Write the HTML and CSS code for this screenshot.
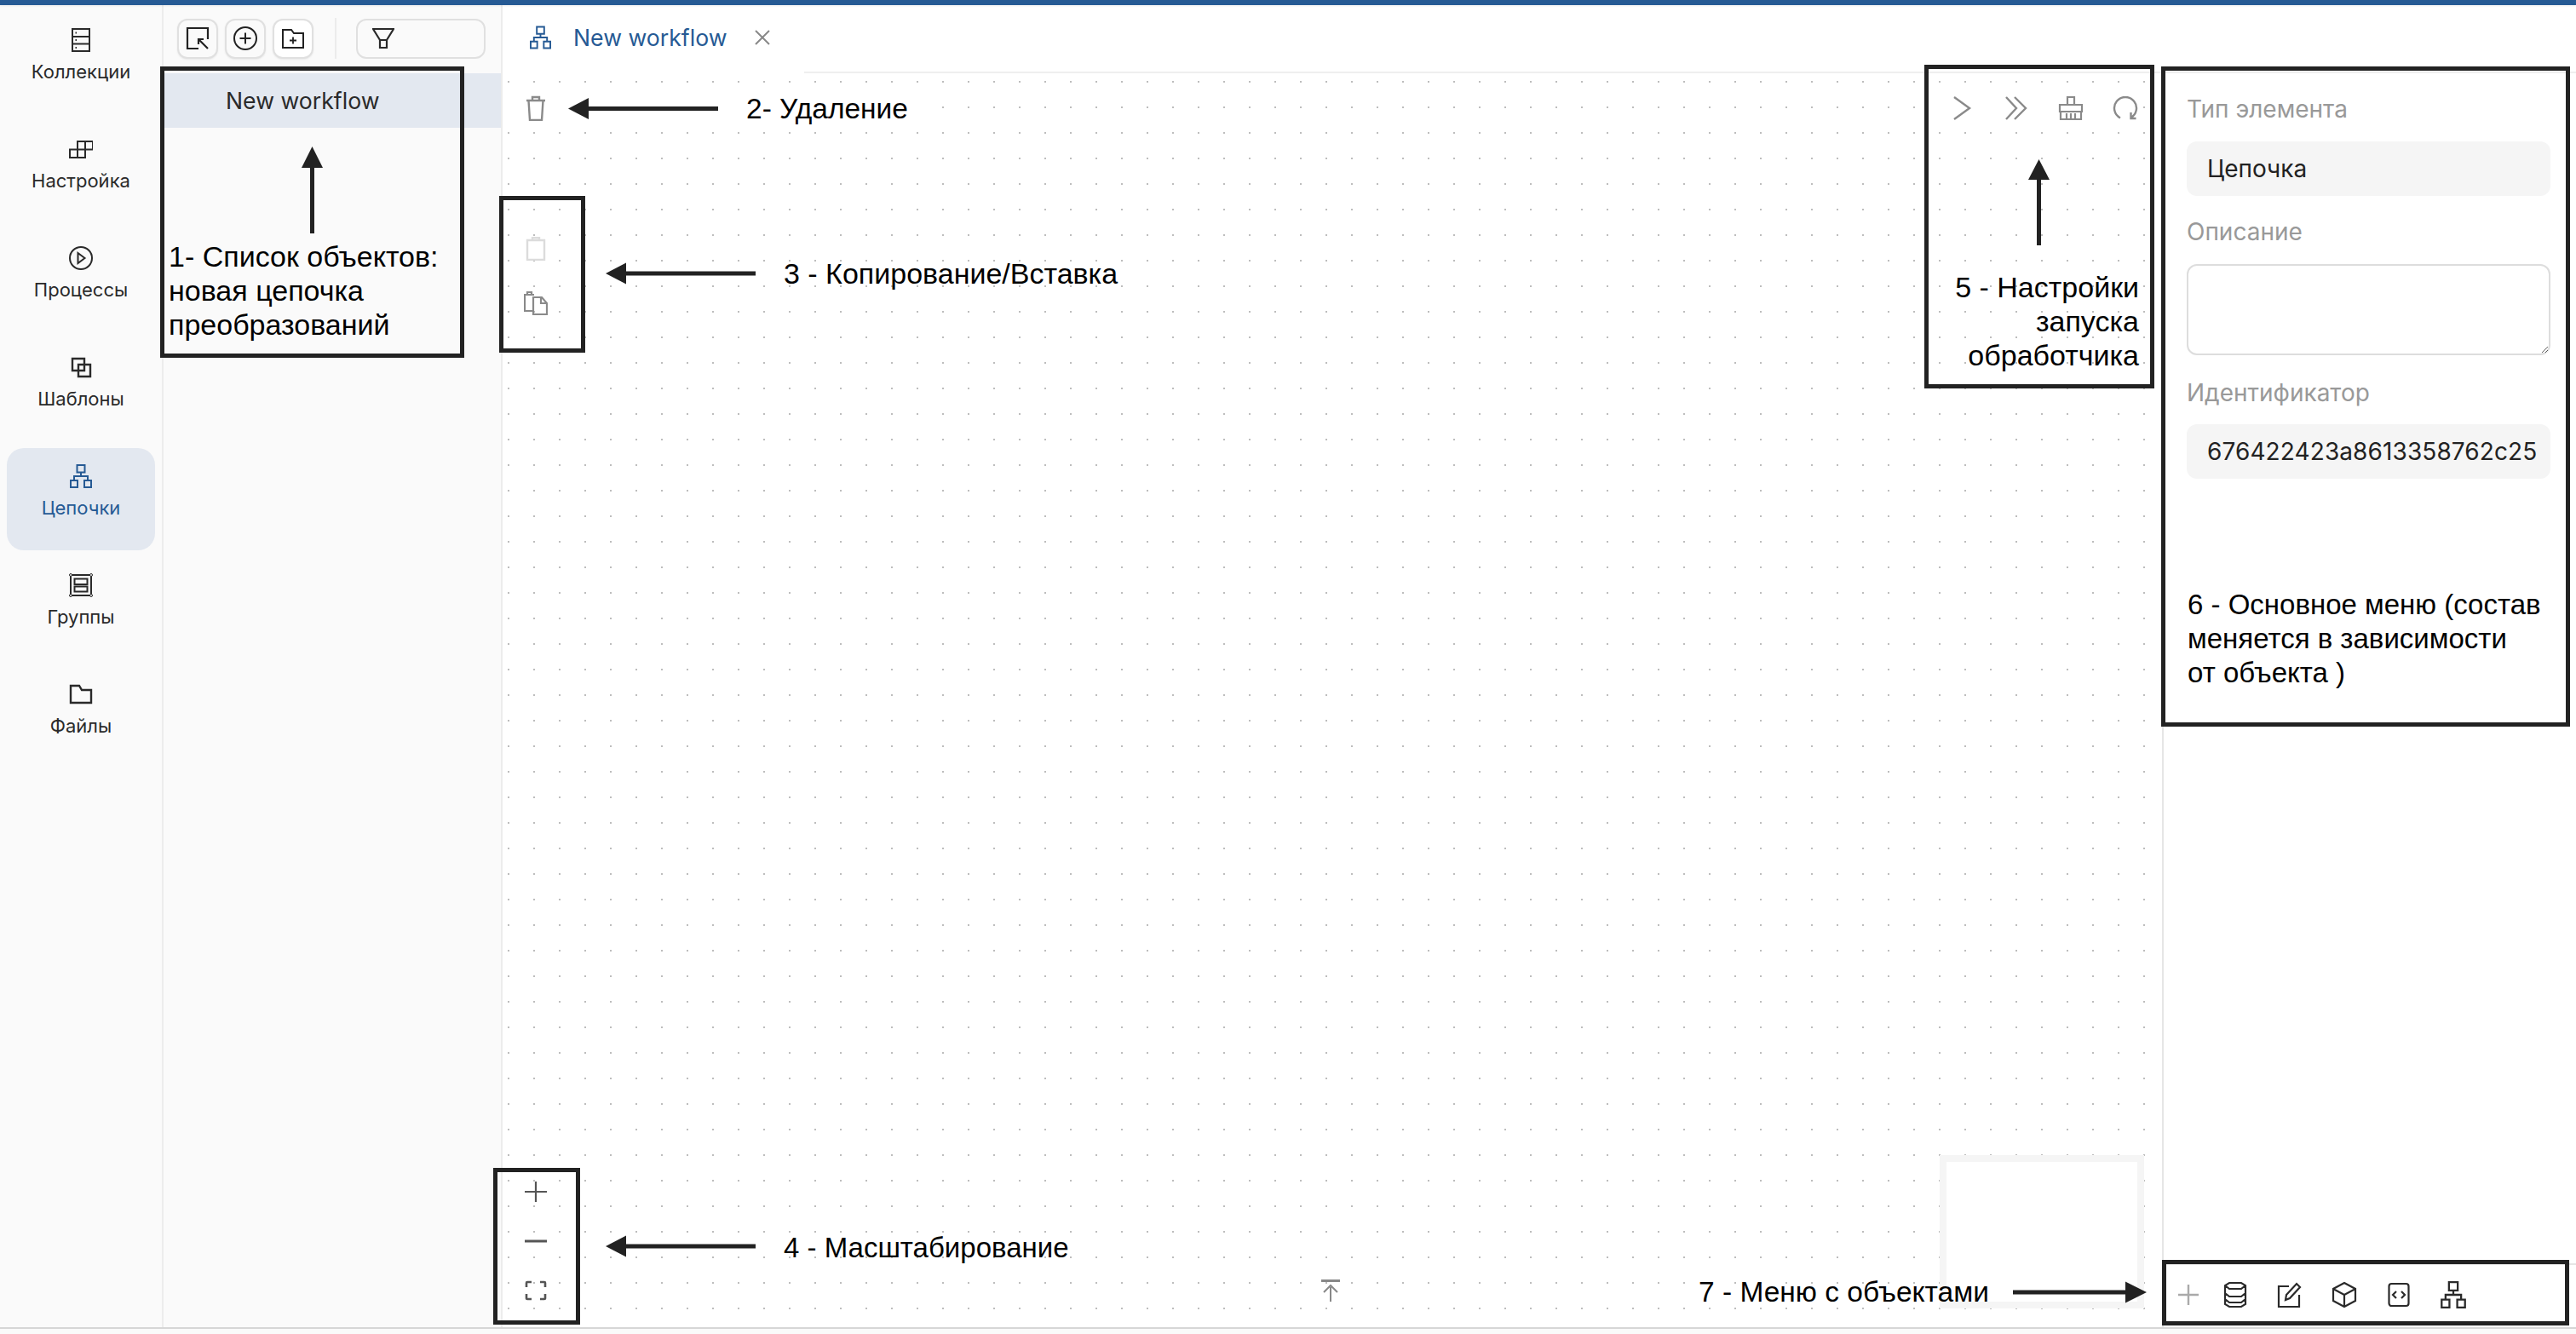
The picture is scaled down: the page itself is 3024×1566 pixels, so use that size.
FILE: index.html
```html
<!DOCTYPE html>
<html>
  <head>
    <title>New workflow</title>
    <link rel="stylesheet" href="styles.css">
  </head>
  <body>
    <svg class="sprites" width="0" height="0">
      <symbol id="i-tree" viewBox="0 0 26 28">
        <path d="M8.5 1h9v8.5h-9zM13 9.5V14M5 19v-5h16v5M1 19h8v8H1zM17 19h8v8h-8z" fill="none" stroke="currentColor" stroke-width="2"/>
      </symbol>
    </svg>

    <div class="topbar"></div>

    <div class="app">
      <!-- left navigation -->
      <nav class="sidebar">
        <a class="nav-item">
          <svg class="nav-icon" viewBox="0 0 28 28"><path d="M4 1h20v26H4zM4 10h20M4 18.500h20M7.500 5.500h1.500M7.500 14h1.500M7.500 23h1.500" fill="none" stroke="currentColor" stroke-width="2"/></svg>
          <span>Коллекции</span>
        </a>
        <a class="nav-item">
          <svg class="nav-icon" viewBox="0 0 28 28"><path d="M1 14.500h18v9.500H1zM10 14.500V24M10 14.500V5h18v9.500H19zM19 5v9.500" fill="none" stroke="currentColor" stroke-width="2"/></svg>
          <span>Настройка</span>
        </a>
        <a class="nav-item">
          <svg class="nav-icon" viewBox="0 0 28 28"><circle cx="14" cy="14" r="13" fill="none" stroke="currentColor" stroke-width="2"/><path d="M10.500 8l8 6-8 6z" fill="none" stroke="currentColor" stroke-width="2"/></svg>
          <span>Процессы</span>
        </a>
        <a class="nav-item">
          <svg class="nav-icon" viewBox="0 0 28 28"><path d="M4 4h14v14H4zM11 11h14v14H11z" fill="none" stroke="currentColor" stroke-width="2.400"/></svg>
          <span>Шаблоны</span>
        </a>
        <a class="nav-item active">
          <svg class="nav-icon"><use href="#i-tree"/></svg>
          <span>Цепочки</span>
        </a>
        <a class="nav-item">
          <svg class="nav-icon" viewBox="0 0 28 28"><path d="M2 2h24v24H2zM6.500 6.500h15v6.500h-15zM6.500 15.500h15v6h-15z" fill="none" stroke="currentColor" stroke-width="2"/><g fill="#fafafa" stroke="currentColor" stroke-width="1"><circle cx="2" cy="2" r="1.500"/><circle cx="26" cy="2" r="1.500"/><circle cx="2" cy="26" r="1.500"/><circle cx="26" cy="26" r="1.500"/></g></svg>
          <span>Группы</span>
        </a>
        <a class="nav-item">
          <svg class="nav-icon" viewBox="0 0 28 28"><path d="M2 4h10l3 5h11v15H2z" fill="none" stroke="currentColor" stroke-width="2.400"/></svg>
          <span>Файлы</span>
        </a>
      </nav>

      <!-- objects list -->
      <section class="panel">
        <div class="panel-toolbar">
          <button class="tool-btn">
            <svg class="btn-icon" viewBox="0 0 28 28"><path d="M26 15V2H2v24h13M26 26L15 15M15 21v-6h6" fill="none" stroke="currentColor" stroke-width="2.200"/></svg>
          </button>
          <button class="tool-btn">
            <svg class="btn-icon" viewBox="0 0 28 28"><circle cx="14" cy="14" r="13" fill="none" stroke="currentColor" stroke-width="2"/><path d="M14 7.500v13M7.500 14h13" fill="none" stroke="currentColor" stroke-width="2"/></svg>
          </button>
          <button class="tool-btn tool-btn-white">
            <svg class="btn-icon" viewBox="0 0 28 28"><path d="M2 4h10l3 4h11v17H2z" fill="none" stroke="currentColor" stroke-width="2"/><path d="M14 12.500v8M10 16.500h8" fill="none" stroke="currentColor" stroke-width="1.800"/></svg>
          </button>
          <span class="toolbar-divider"></span>
          <div class="filter">
            <svg class="filter-icon" viewBox="0 0 26 24"><path d="M1 1h24l-8 13v9H9v-9zM9 14h8" fill="none" stroke="currentColor" stroke-width="2.200"/></svg>
          </div>
        </div>
        <div class="list-row">New workflow</div>
      </section>

      <!-- workspace -->
      <main class="main">
        <div class="tabbar">
          <div class="tab">
            <svg class="tab-icon"><use href="#i-tree"/></svg>
            <span class="tab-title">New workflow</span>
            <svg class="tab-close" viewBox="0 0 18 18"><path d="M1 1l16 16M17 1L1 17" fill="none" stroke="currentColor" stroke-width="2"/></svg>
          </div>
          <div class="tab-rest"></div>
        </div>

        <div class="work-body">
          <div class="canvas">
            <div class="canvas-strip strip-left">
              <svg class="canvas-icon icon-trash" viewBox="0 0 24 30"><path d="M1 6h22M8 6V2h8v4M3.500 6l1.500 23h14l1.500-23" fill="none" stroke="currentColor" stroke-width="2.400"/></svg>
            </div>
            <div class="clip-tools">
              <svg class="canvas-icon clip-off" viewBox="0 0 28 28"><path d="M4 4h20v23H4zM10 4V1h8v3" fill="none" stroke="currentColor" stroke-width="2.400"/></svg>
              <svg class="canvas-icon" viewBox="0 0 28 28"><path d="M11 23H1V4h11M4 4V1h5v3M11 7h10l6 7v13H11zM20 7v7h7" fill="none" stroke="currentColor" stroke-width="2.200"/></svg>
            </div>
            <div class="canvas-strip strip-right">
              <svg class="run-icon" viewBox="0 0 32 28"><path d="M7 1l18 13L7 27" fill="none" stroke="currentColor" stroke-width="2.400"/></svg>
              <svg class="run-icon" viewBox="0 0 32 28"><path d="M4 1l12 13L4 27M14 1l13 13-13 13" fill="none" stroke="currentColor" stroke-width="2.400"/></svg>
              <svg class="run-icon" viewBox="0 0 32 28"><path d="M12 10V1h8v9M3 10h26v8H3zM4 18v9h24v-9M11 20v7M16 20v7M21 20v7" fill="none" stroke="currentColor" stroke-width="2.200"/></svg>
              <svg class="run-icon" viewBox="0 0 32 28"><path d="M10 25.500A13 13 0 1 1 22 25.500M22.500 19v7h6" fill="none" stroke="currentColor" stroke-width="2.400"/></svg>
            </div>
            <div class="zoom-tools">
              <svg class="zoom-icon" viewBox="0 0 26 24"><path d="M0 12h26M13 0v24" fill="none" stroke="currentColor" stroke-width="2.200"/></svg>
              <svg class="zoom-icon" viewBox="0 0 26 24"><path d="M0 12h26" fill="none" stroke="currentColor" stroke-width="3"/></svg>
              <svg class="zoom-icon" viewBox="0 0 26 24"><path d="M2 8V3a1 1 0 0 1 1-1h5M18 2h5a1 1 0 0 1 1 1v5M24 16v5a1 1 0 0 1-1 1h-5M8 22H3a1 1 0 0 1-1-1v-5" fill="none" stroke="currentColor" stroke-width="2.600"/></svg>
            </div>
            <svg class="fold-icon" viewBox="0 0 22 26"><path d="M0 1.500h22" fill="none" stroke="currentColor" stroke-width="3"/><path d="M11 26V9M3 15l8-8 8 8" fill="none" stroke="currentColor" stroke-width="2"/></svg>
            <div class="minimap"></div>
          </div>

          <!-- properties -->
          <aside class="props">
            <div class="props-form">
              <label class="field-label">Тип элемента</label>
              <input class="field-input" value="Цепочка" readonly>
              <label class="field-label">Описание</label>
              <textarea class="field-area"></textarea>
              <label class="field-label field-label-last">Идентификатор</label>
              <input class="field-input field-id" value="676422423a8613358762c25" readonly>
            </div>
            <div class="props-bar">
              <svg class="bar-icon bar-add" viewBox="0 0 32 32"><path d="M4 16h24M16 4v24" fill="none" stroke="currentColor" stroke-width="2.400"/></svg>
              <svg class="bar-icon" viewBox="0 0 32 32"><path d="M9 2h14l5 3v22l-5 3H9l-5-3V5zM4 5l5 4h14l5-4M4 14l5 4h14l5-4M4 21l5 4h14l5-4" fill="none" stroke="currentColor" stroke-width="2.200"/></svg>
              <svg class="bar-icon" viewBox="0 0 32 32"><path d="M15 6H3v24h24V16M11 22l1-6L24 3l4 4-12 13z" fill="none" stroke="currentColor" stroke-width="2.200"/></svg>
              <svg class="bar-icon" viewBox="0 0 32 32"><path d="M16 2l13 7v14l-13 7-13-7V9zM3 9l13 7 13-7M16 16v14" fill="none" stroke="currentColor" stroke-width="2.200"/></svg>
              <svg class="bar-icon" viewBox="0 0 32 32"><rect x="4.500" y="3" width="23" height="26" rx="3" fill="none" stroke="currentColor" stroke-width="2.200"/><path d="M13 12l-4 4 4 4M19 12l4 4-4 4" fill="none" stroke="currentColor" stroke-width="2.200"/></svg>
              <svg class="bar-icon"><use href="#i-tree"/></svg>
            </div>
          </aside>
        </div>
      </main>
    </div>

    <div class="footer"></div>

    <!-- annotations drawn over the screenshot -->
    <div class="annotations">
      <svg class="arrows" width="3024" height="1566" viewBox="0 0 3024 1566">
        <path d="M364 197h5v77h-5z M366.500 172l12.500 25h-25z"/>
        <path d="M691 125h152v5H691z M667 127.500l24-12.500v25z"/>
        <path d="M735 318.500h152v5H735z M711 321l24-12.500v25z"/>
        <path d="M735 1460.500h152v5H735z M711 1463l24-12.500v25z"/>
        <path d="M2391 211h5v77h-5z M2393.500 187l12.500 24h-25z"/>
        <path d="M2363 1514.500h132v5h-132z M2520 1517l-25-12.500v25z"/>
      </svg>
      <div class="ann-box box-1"></div>
      <div class="ann-box box-3"></div>
      <div class="ann-box box-4"></div>
      <div class="ann-box box-5"></div>
      <div class="ann-box box-6"></div>
      <div class="ann-box box-7"></div>
      <div class="note note-1">1- Список объектов:<br>новая цепочка<br>преобразований</div>
      <div class="note note-2">2- Удаление</div>
      <div class="note note-3">3 - Копирование/Вставка</div>
      <div class="note note-4">4 - Масштабирование</div>
      <div class="note note-5">5 - Настройки<br>запуска<br>обработчика</div>
      <div class="note note-6">6 - Основное меню (состав<br>меняется в зависимости<br>от объекта )</div>
      <div class="note note-7">7 - Меню с объектами</div>
    </div>
  </body>
</html>
```

FILE: styles.css
```css
* {
  box-sizing: border-box;
}

html,
body {
  margin: 0;
  height: 100%;
}

body {
  position: relative;
  width: 3024px;
  height: 1566px;
  overflow: hidden;
  background-color: #fafafa;
  color: #2a2a2a;
  font-family: Inter, "Noto Sans", sans-serif;
}

.sprites {
  position: absolute;
}

.topbar {
  position: relative;
  z-index: 1;
  height: 6px;
  background-color: #265a94;
  box-shadow: 0 1px 3px rgba(0, 0, 0, 0.08);
}

.app {
  display: flex;
  height: 1552px;
}

.footer {
  height: 8px;
  border-top: 2px solid #d6d6d6;
  background-color: #fafafa;
}

/* sidebar */
.sidebar {
  flex: none;
  display: flex;
  flex-direction: column;
  gap: 8px;
  width: 192px;
  padding: 8px 8px 0 8px;
  border-right: 2px solid #ececec;
}

.nav-item {
  display: flex;
  flex-direction: column;
  align-items: center;
  gap: 9px;
  height: 120px;
  padding-top: 19px;
  border-radius: 20px;
  font-size: 22px;
  line-height: 28px;
}

.nav-icon {
  width: 28px;
  height: 28px;
}

.nav-item.active {
  background-color: #e3e8f0;
  color: #265a94;
}

/* objects list */
.panel {
  flex: none;
  width: 398px;
  border-right: 2px solid #ececec;
}

.panel-toolbar {
  display: flex;
  align-items: center;
  height: 80px;
  padding: 0 0 2px 16px;
}

.tool-btn {
  display: flex;
  align-items: center;
  justify-content: center;
  width: 48px;
  height: 47px;
  margin-right: 8px;
  padding: 0;
  border: 2px solid #e0e0e0;
  border-radius: 12px;
  background-color: #fafafa;
  box-shadow: 0 1px 2px #e8e8e8;
  color: #222;
}

.tool-btn-white {
  background-color: #fff;
}

.btn-icon {
  width: 28px;
  height: 28px;
}

.toolbar-divider {
  width: 2px;
  height: 48px;
  margin: 0 23px 0 17px;
  background-color: #ececec;
}

.filter {
  display: flex;
  align-items: center;
  width: 152px;
  height: 47px;
  padding-left: 17px;
  border: 2px solid #e0e0e0;
  border-radius: 12px;
}

.filter-icon {
  width: 26px;
  height: 24px;
}

.list-row {
  height: 64px;
  padding-left: 73px;
  background-color: #e3e8f0;
  font-size: 26.67px;
  line-height: 64px;
}

/* workspace */
.main {
  flex: 1;
  display: flex;
  flex-direction: column;
  min-width: 0;
  background-color: #fff;
}

.tabbar {
  flex: none;
  display: flex;
  height: 80px;
}

.tab {
  display: flex;
  align-items: center;
  width: 354px;
  padding: 0 0 4px 32px;
  border-radius: 16px 16px 0 0;
  background-color: #fff;
  color: #265a94;
}

.tab-icon {
  width: 25px;
  height: 28px;
}

.tab-title {
  margin: 0 32px 0 26px;
  font-size: 26.67px;
}

.tab-close {
  width: 18px;
  height: 18px;
  color: #888;
}

.tab-rest {
  flex: 1;
  border-bottom: 2px solid #efefef;
}

.work-body {
  flex: 1;
  display: flex;
  min-height: 0;
}

.canvas {
  position: relative;
  flex: none;
  width: 1948px;
  background-image: radial-gradient(circle, #bdbdbd 1px, transparent 1.3px);
  background-position: -8px -5px;
  background-size: 30px 30px;
}

.canvas-icon {
  display: block;
  width: 28px;
  height: 28px;
  color: #8a8a8a;
}

.canvas-strip {
  position: absolute;
  top: 21px;
  display: flex;
  align-items: center;
  height: 40px;
  background-color: #fff;
}

.strip-left {
  left: 0;
  width: 515px;
  padding-left: 27px;
}

.icon-trash {
  width: 24px;
  height: 30px;
}

.clip-tools {
  position: absolute;
  top: 192px;
  left: 25px;
  display: flex;
  flex-direction: column;
  gap: 36px;
}

.clip-off {
  color: #dcdcdc;
}

.strip-right {
  right: 27px;
  gap: 32px;
  padding-left: 20px;
}

.run-icon {
  width: 32px;
  height: 28px;
  color: #8a8a8a;
}

.zoom-tools {
  position: absolute;
  top: 1301px;
  left: 26px;
  display: flex;
  flex-direction: column;
  gap: 34px;
}

.zoom-icon {
  display: block;
  width: 26px;
  height: 24px;
  color: #555;
}

.fold-icon {
  position: absolute;
  left: 961px;
  bottom: 30px;
  width: 22px;
  height: 26px;
  color: #888;
}

.minimap {
  position: absolute;
  right: 21px;
  bottom: 22px;
  width: 240px;
  height: 180px;
  border: 8px solid #f5f5f5;
  background-color: #fff;
}

/* properties */
.props {
  flex: 1;
  display: flex;
  flex-direction: column;
  min-width: 0;
  border-left: 2px solid #e6e6e6;
  background-color: #fff;
}

.props-form {
  flex: 1;
  display: flex;
  flex-direction: column;
  padding: 24px 30px 0 27px;
}

.field-label {
  height: 36px;
  margin-bottom: 20px;
  color: #999;
  font-size: 28px;
  line-height: 36px;
}

.field-label-last {
  margin-top: 8px;
  margin-bottom: 19px;
}

.field-input {
  width: 100%;
  height: 64px;
  margin-bottom: 24px;
  padding: 0 24px;
  border: 0;
  border-radius: 12px;
  background-color: #f5f5f5;
  color: #222;
  font-family: Inter, "Noto Sans", sans-serif;
  font-size: 28px;
  outline: none;
}

.field-id {
  padding-right: 0;
  letter-spacing: 0.1px;
}

.field-area {
  display: block;
  width: 100%;
  height: 107px;
  margin-bottom: 18px;
  border: 2px solid #ddd;
  border-radius: 12px;
  background-color: #fff;
}

.props-bar {
  display: flex;
  align-items: center;
  height: 75px;
  padding: 0 0 4px 13px;
  border-top: 2px solid #e6e6e6;
}

.bar-icon {
  width: 32px;
  height: 32px;
  margin-right: 32px;
}

.bar-add {
  margin-right: 23px;
  color: #aaa;
}

/* annotations */
.annotations {
  position: absolute;
  top: 0;
  left: 0;
  width: 3024px;
  height: 1566px;
  pointer-events: none;
}

.arrows {
  position: absolute;
  top: 0;
  left: 0;
  fill: #222;
}

.ann-box {
  position: absolute;
  border: 5px solid #222;
}

.box-1 {
  left: 188px;
  top: 78px;
  width: 357px;
  height: 342px;
}

.box-3 {
  left: 586px;
  top: 230px;
  width: 101px;
  height: 184px;
}

.box-4 {
  left: 579px;
  top: 1371px;
  width: 102px;
  height: 184px;
}

.box-5 {
  left: 2259px;
  top: 76px;
  width: 270px;
  height: 380px;
}

.box-6 {
  left: 2537px;
  top: 78px;
  width: 480px;
  height: 775px;
}

.box-7 {
  left: 2538px;
  top: 1479px;
  width: 478px;
  height: 77px;
}

.note {
  position: absolute;
  color: #000;
  font-family: "Liberation Sans", Arial, sans-serif;
  font-size: 33.5px;
  line-height: 40px;
  white-space: nowrap;
}

.note-1 {
  left: 198px;
  top: 281px;
  font-size: 34px;
}

.note-2 {
  left: 876px;
  top: 108px;
}

.note-3 {
  left: 920px;
  top: 301px;
  font-size: 34px;
}

.note-4 {
  left: 920px;
  top: 1445px;
  font-size: 33px;
}

.note-5 {
  right: 513px;
  top: 317px;
  font-size: 34px;
  text-align: right;
}

.note-6 {
  left: 2568px;
  top: 690px;
  font-size: 33px;
}

.note-7 {
  left: 1994px;
  top: 1497px;
}
```
